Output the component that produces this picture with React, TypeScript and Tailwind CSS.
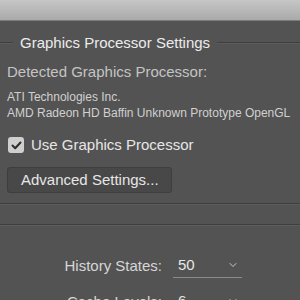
import React from "react";
import { ChevronDown } from "lucide-react";

const font = { fontFamily: '"Liberation Sans", Arial, sans-serif' };

const Groove = () => (
  <div className="w-full">
    <div className="h-px bg-[#3f3f3f]" />
    <div className="h-px bg-[#5c5c5c]" />
  </div>
);

const PrefSelect = ({ label, value }: { label: string; value: string }) => (
  <div className="flex h-[24px] items-center">
    <span className="w-[166px] pr-[4px] text-right text-[15px] text-[#d6d6d6]">{label}</span>
    <div className="relative ml-[7px] flex h-[24px] w-[69px] items-center border-b border-[#8a8a8a] pl-[5px] text-[15px] text-[#e6e6e6]">
      {value}
      <ChevronDown className="absolute right-[3px] top-[5px] text-[#c8c8c8]" size={12} strokeWidth={2} />
    </div>
  </div>
);

export default function App() {
  return (
    <div className="flex h-[300px] w-[300px] flex-col overflow-hidden bg-[#535353]" style={font}>
      <div className="h-[20px] shrink-0 bg-gradient-to-b from-[#c6c6c6] to-[#aaaaaa]" />
      <div className="h-px shrink-0 bg-[#7d7d7d]" />

      <div className="mt-[12px] flex h-[20px] shrink-0 items-center">
        <div className="w-[13px]">
          <Groove />
        </div>
        <span className="px-[7px] text-[15px] leading-[20px] text-[#ececec]">Graphics Processor Settings</span>
        <div className="flex-1">
          <Groove />
        </div>
      </div>

      <div className="flex shrink-0 flex-col px-[7px]">
        <div className="mt-[10px] text-[15px] leading-[18px] text-[#c4c4c4]">Detected Graphics Processor:</div>
        <div className="mt-[8px] whitespace-nowrap text-[12px] leading-[16px] text-[#d0d0d0]">ATI Technologies Inc.</div>
        <div className="whitespace-nowrap text-[12px] leading-[16px] text-[#d0d0d0]">
          AMD Radeon HD Baffin Unknown Prototype OpenGL
        </div>

        <label className="mt-[16px] flex h-[16px] items-center gap-[7px] pl-[1px]">
          <span className="flex h-[16px] w-[16px] items-center justify-center rounded-[3px] bg-[#cfcfcf]">
            <svg width="11" height="9" viewBox="0 0 11 9" fill="none">
              <path d="M1.5 4.5 L4.2 7.2 L9.5 1.5" stroke="#2e2e2e" strokeWidth="2" strokeLinecap="round" strokeLinejoin="round" />
            </svg>
          </span>
          <span className="text-[15px] text-[#e6e6e6]">Use Graphics Processor</span>
        </label>

        <button className="mt-[14px] flex h-[26px] w-[165px] items-center rounded-[3px] border border-[#3e3e3e] bg-[#484848] pl-[13px] text-[15px] text-[#e6e6e6]">
          Advanced Settings...
        </button>
      </div>

      <div className="mt-[10px] shrink-0">
        <Groove />
      </div>
      <div className="mt-[19px] shrink-0">
        <Groove />
      </div>

      <div className="mt-[28px] flex shrink-0 flex-col gap-[12px]">
        <PrefSelect label="History States:" value="50" />
        <PrefSelect label="Cache Levels:" value="6" />
      </div>
    </div>
  );
}
